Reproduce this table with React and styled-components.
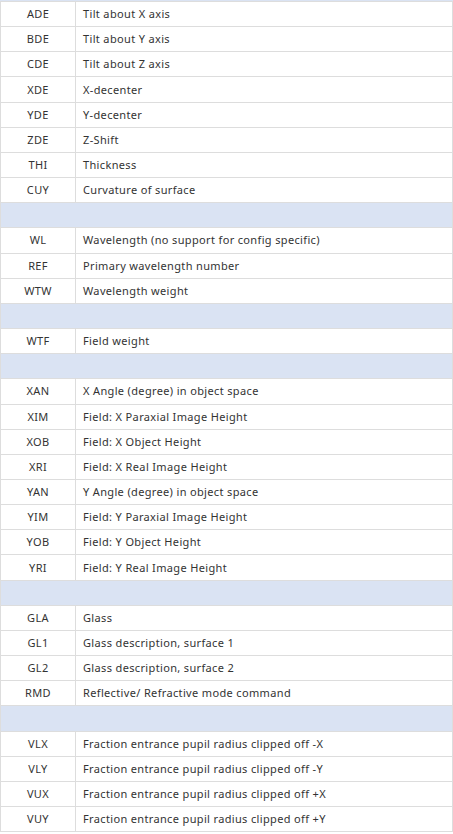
import React from "react";
import styled, { createGlobalStyle } from "styled-components";

const rows = [
  ["ADE", "Tilt about X axis"],
  ["BDE", "Tilt about Y axis"],
  ["CDE", "Tilt about Z axis"],
  ["XDE", "X-decenter"],
  ["YDE", "Y-decenter"],
  ["ZDE", "Z-Shift"],
  ["THI", "Thickness"],
  ["CUY", "Curvature of surface"],
  null,
  ["WL", "Wavelength (no support for config specific)"],
  ["REF", "Primary wavelength number"],
  ["WTW", "Wavelength weight"],
  null,
  ["WTF", "Field weight"],
  null,
  ["XAN", "X Angle (degree) in object space"],
  ["XIM", "Field: X Paraxial Image Height"],
  ["XOB", "Field: X Object Height"],
  ["XRI", "Field: X Real Image Height"],
  ["YAN", "Y Angle (degree) in object space"],
  ["YIM", "Field: Y Paraxial Image Height"],
  ["YOB", "Field: Y Object Height"],
  ["YRI", "Field: Y Real Image Height"],
  null,
  ["GLA", "Glass"],
  ["GL1", "Glass description, surface 1"],
  ["GL2", "Glass description, surface 2"],
  ["RMD", "Reflective/ Refractive mode command"],
  null,
  ["VLX", "Fraction entrance pupil radius clipped off -X"],
  ["VLY", "Fraction entrance pupil radius clipped off -Y"],
  ["VUX", "Fraction entrance pupil radius clipped off +X"],
  ["VUY", "Fraction entrance pupil radius clipped off +Y"],
];

const GlobalStyle = createGlobalStyle`
  html, body {
    margin: 0;
    padding: 0;
    background: #fff;
  }
  body {
    font-family: "Noto Sans", "DejaVu Sans", sans-serif;
    font-size: 11px;
    letter-spacing: 0.35px;
    color: #333;
  }
`;

const Wrapper = styled.div`
  width: 453px;
`;

const TopStrip = styled.div`
  height: 1px;
  background: #dae3f3;
`;

const Table = styled.div`
  border-left: 1px solid #ddd;
  border-right: 1px solid #ddd;
  border-top: 1px solid #ddd;
`;

const Row = styled.div`
  display: grid;
  grid-template-columns: 75px 1fr;
  height: 25.16px;
  box-sizing: border-box;
  border-bottom: 1px solid #ddd;
  background: ${(p) => (p.$group ? "#dae3f3" : "#fff")};
`;

const Code = styled.div`
  display: flex;
  align-items: center;
  justify-content: center;
  padding-bottom: 1px;
  border-right: 1px solid #ddd;
`;

const Desc = styled.div`
  display: flex;
  align-items: center;
  padding-left: 7px;
  padding-bottom: 1px;
  white-space: nowrap;
`;

export default function App() {
  return (
    <Wrapper>
      <GlobalStyle />
      <TopStrip />
      <Table>
        {rows.map((r, i) =>
          r ? (
            <Row key={i}>
              <Code>{r[0]}</Code>
              <Desc>{r[1]}</Desc>
            </Row>
          ) : (
            <Row key={i} $group />
          )
        )}
      </Table>
    </Wrapper>
  );
}
